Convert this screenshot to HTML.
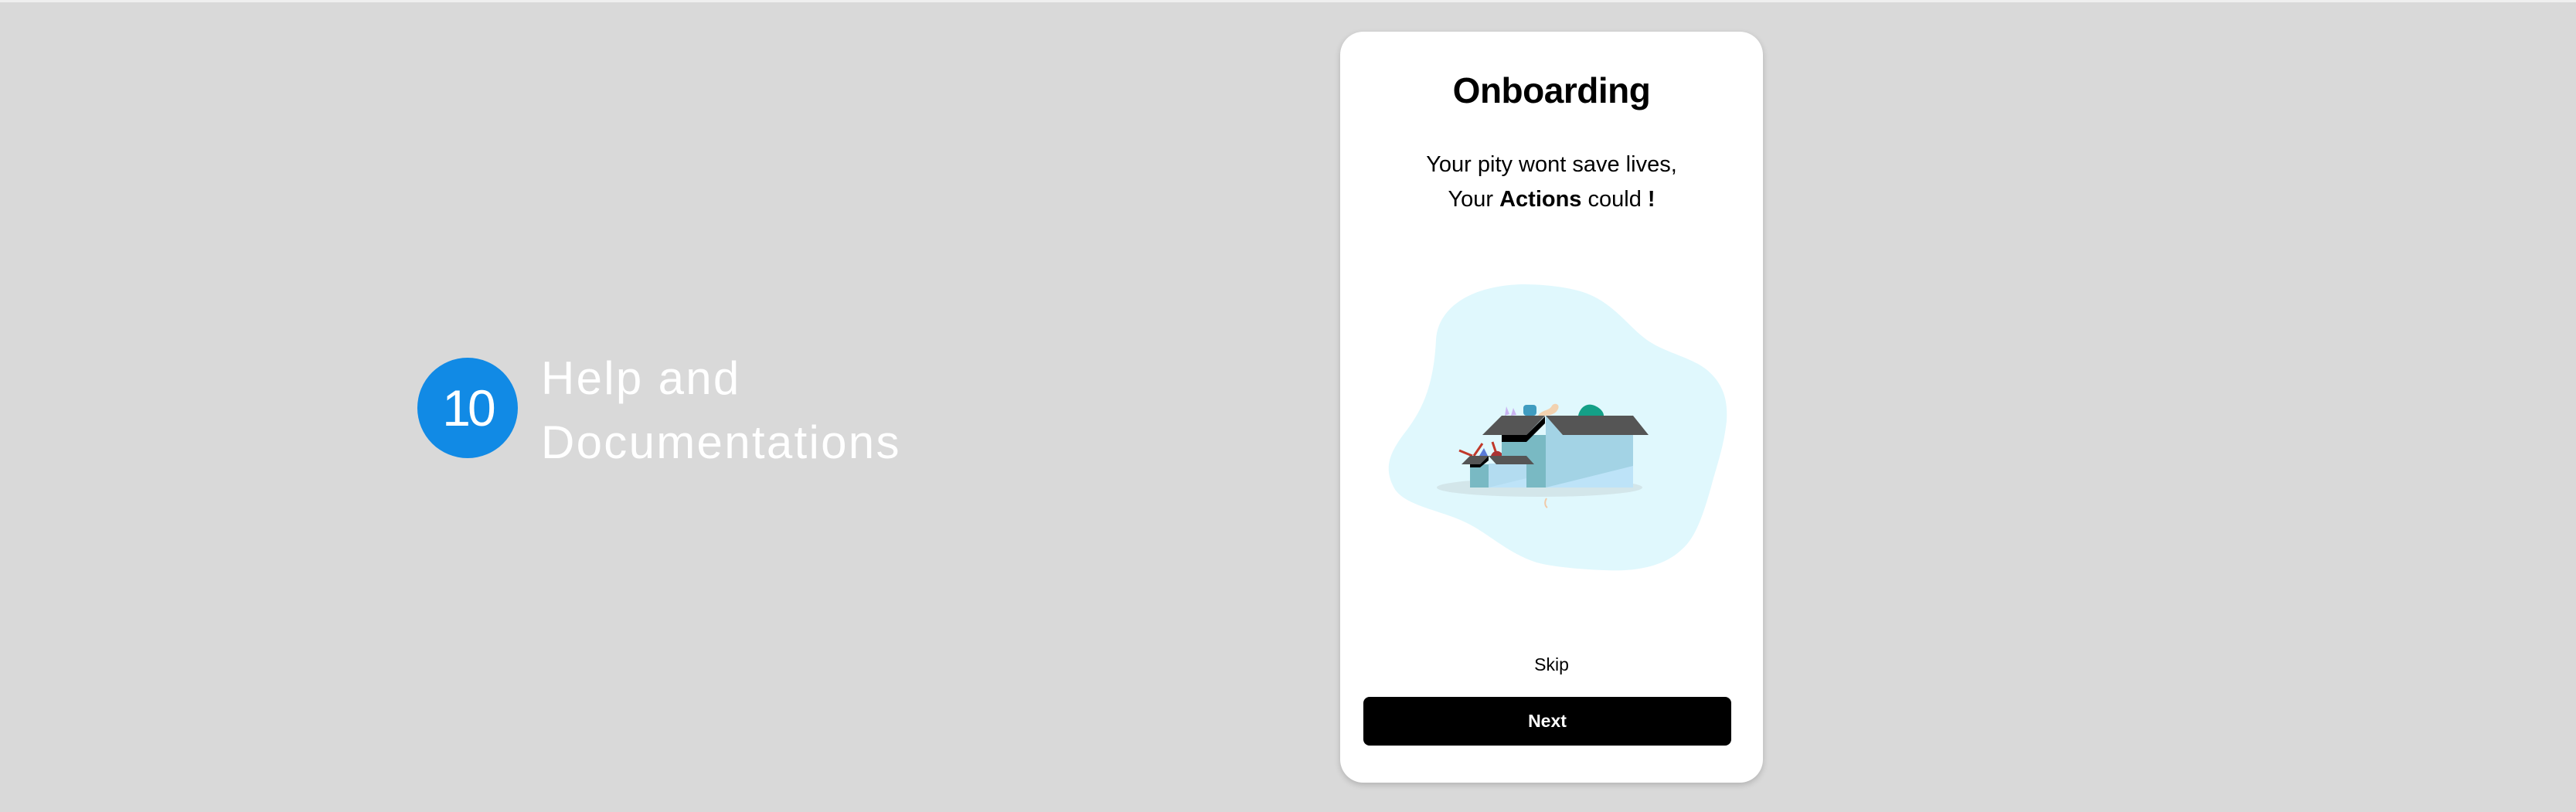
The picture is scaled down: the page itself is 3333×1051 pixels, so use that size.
<!DOCTYPE html>
<html><head><meta charset="utf-8"><style>
html,body{margin:0;padding:0}
body{width:3333px;height:1051px;background:#d9d9d9;position:relative;overflow:hidden;font-family:"Liberation Sans",Arial,sans-serif}
.top{position:absolute;left:0;top:0;width:3333px;height:3px;background:#efefef}
.circle{position:absolute;left:540px;top:463px;width:130px;height:130px;border-radius:50%;background:#118ae5;color:#fff;font-size:66px;line-height:130px;text-align:center;letter-spacing:-4px}
.help{position:absolute;left:700px;top:448px;color:#fff;font-size:60px;line-height:83px;letter-spacing:2.3px}
.card{position:absolute;left:1734px;top:41px;width:547px;height:972px;background:#fff;border-radius:30px;box-shadow:0 3px 8px rgba(0,0,0,0.18)}
.t{position:absolute;left:1734px;width:547px;text-align:center;color:#000}
.btn{position:absolute;left:1764px;top:902px;width:476px;height:63px;background:#000;border-radius:8px;color:#fff;font-weight:bold;font-size:23px;line-height:63px;text-align:center}
</style></head><body>
<div class="top"></div>
<div class="circle">10</div>
<div class="help">Help and<br>Documentations</div>
<div class="card"></div>
<div class="t" style="top:90px;font-size:46px;font-weight:bold;letter-spacing:-0.5px">Onboarding</div>
<div class="t" style="top:191px;font-size:29px;line-height:45px">Your pity wont save lives,<br>Your <b>Actions</b> could <b>!</b></div>
<svg style="position:absolute;left:0;top:0" width="3333" height="1051">
<path d="M1858 440 C1860 400 1900 370 1969 368 C2000 368 2030 372 2048 378 C2085 390 2105 420 2127 437 C2150 456 2190 462 2210 480 C2228 496 2236 515 2234 545 C2230 580 2222 600 2214 630 C2200 680 2190 700 2174 713 C2150 735 2110 740 2075 738 C2030 736 2000 732 1985 727 C1950 715 1925 690 1898 677 C1865 660 1815 655 1803 630 C1790 605 1798 585 1820 557 C1840 530 1855 500 1858 440 Z" fill="#e0f8fd"/>
<ellipse cx="1992" cy="631" rx="133" ry="12" fill="#d3e6ea"/>
<path d="M1947 538 L1949 526 L1953 536 Z M1955 538 L1958 528 L1962 537 Z" fill="#c9b3f0"/>
<rect x="1971" y="524" width="17" height="14" rx="4" fill="#3f9cc0"/>
<path d="M1990 538 C1995 530 2005 532 2008 525 C2012 520 2020 524 2015 531 C2012 536 2005 538 1998 538 Z" fill="#f2d2b0"/>
<path d="M2042 538 C2044 528 2052 522 2060 524 C2068 526 2075 532 2075 538 Z" fill="#14a087"/>
<path d="M1888 583 L1905 590 M1907 590 L1918 574 M1931 572 L1937 590" stroke="#c0392b" stroke-width="3"/>
<path d="M1914 590 L1920 580 L1925 590 Z" fill="#5a7bd8"/>
<path d="M1929 590 C1932 582 1940 582 1944 588 L1944 590 Z" fill="#a33"/>
<path d="M1956 590 C1957 580 1966 578 1971 590 Z" fill="#f1c9a0"/>
<rect x="1943" y="563" width="57" height="68" fill="#79b9c3"/>
<rect x="2000" y="563" width="113" height="68" fill="#a3d3e5"/>
<path d="M2000 538 L2022 563 L2000 563 Z" fill="#a3d3e5"/>
<path d="M2000 631 L2113 631 L2113 603 Z" fill="#bde3f8"/>
<path d="M2000 538 L2113 538 L2133 563 L2022 563 Z" fill="#555"/>
<path d="M1918 563 L1943 538 L1999 538 L1975 563 Z" fill="#555"/>
<path d="M1943 563 L1975 563 L1999 539 L1999 548 L1975 572 L1943 572 Z" fill="#000"/>
<rect x="1902" y="601" width="24" height="30" fill="#79b9c3"/>
<rect x="1926" y="600" width="49" height="31" fill="#b3dcf0"/>
<path d="M1926 631 L1975 631 L1975 619 Z" fill="#bde3f8"/>
<path d="M1891 601 L1902 590 L1926 590 L1915 601 Z" fill="#555"/>
<path d="M1902 601 L1915 601 L1926 590 L1926 596 L1915 605 L1902 605 Z" fill="#000"/>
<path d="M1926 590 L1975 590 L1985 601 L1936 601 Z" fill="#555"/>
<path d="M2001 645 C1998 650 1999 655 2002 657" stroke="#f0c9a8" stroke-width="2" fill="none"/>
</svg>
<div class="t" style="top:847px;font-size:23px">Skip</div>
<div class="btn">Next</div>
</body></html>
